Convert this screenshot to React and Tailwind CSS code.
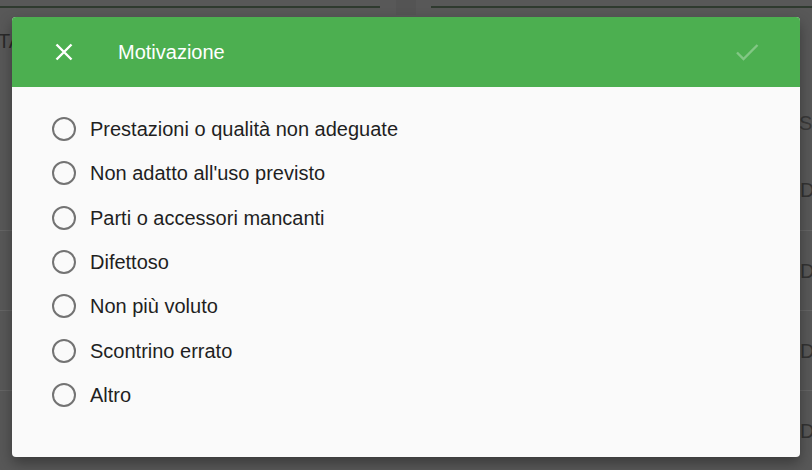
import React from "react";

const options = [
  "Prestazioni o qualità non adeguate",
  "Non adatto all'uso previsto",
  "Parti o accessori mancanti",
  "Difettoso",
  "Non più voluto",
  "Scontrino errato",
  "Altro",
];

function BgSide({ side }) {
  const isRight = side === "right";
  return (
    <div className="flex w-[12px] flex-col overflow-hidden">
      <div className="h-[86px] flex items-center">
        {!isRight && (
          <span className="ml-[-2px] text-[20px] leading-none text-[#2a2a2a]">TA</span>
        )}
      </div>
      <div className="h-[66px] flex items-center pt-[12px]">
        {isRight && (
          <span className="ml-[-1px] text-[20px] leading-none text-[#3a3a3a] whitespace-nowrap">Sta</span>
        )}
      </div>
      {[0, 1, 2, 3].map((i) => (
        <div key={i} className={`h-[80px] flex items-center ${i > 0 ? "border-t border-[#656565]" : ""}`}>
          {isRight && (
            <span className="text-[20px] leading-none text-[#333333]">D</span>
          )}
        </div>
      ))}
    </div>
  );
}

export default function App() {
  return (
    <div className="relative h-[470px] w-[812px] overflow-hidden bg-[#585858] [font-family:'Liberation_Sans',Arial,sans-serif]">
      {/* underlying page (dimmed) */}
      <div className="flex h-full w-full flex-col">
        <div className="flex h-[17px] w-full items-start">
          <div className="mt-[6px] h-[2px] w-[380px] bg-[#2f3a2f]" />
          <div className="h-full w-[16px]" />
          <div className="h-full w-[20px] bg-[#545454]" />
          <div className="h-full w-[15px]" />
          <div className="mt-[6px] h-[2px] flex-1 bg-[#2f3a2f]" />
        </div>
        <div className="flex flex-1 justify-between mt-[-17px]">
          <BgSide side="left" />
          <BgSide side="right" />
        </div>
      </div>

      {/* dialog */}
      <div className="absolute left-[12px] top-[17px] flex h-[440px] w-[788px] flex-col overflow-hidden rounded-[4px] bg-[#fafafa] shadow-[0_6px_14px_rgba(0,0,0,0.35)]">
        <div className="flex h-[70px] shrink-0 items-center bg-[#4caf50] pl-[43px] pr-[41px]">
          <svg width="18" height="18" viewBox="0 0 18 18" className="shrink-0">
            <path d="M1.5 1.5 L16.5 16.5 M16.5 1.5 L1.5 16.5" stroke="#ffffff" strokeWidth="2.4" fill="none" />
          </svg>
          <div className="ml-[45px] text-[20px] leading-none text-white">Motivazione</div>
          <div className="flex-1" />
          <svg width="24" height="20" viewBox="0 0 24 20" className="shrink-0">
            <path d="M2 10.5 L8.5 17 L22.5 3" stroke="rgba(255,255,255,0.3)" strokeWidth="2.4" fill="none" />
          </svg>
        </div>
        <div className="flex flex-col pl-[40px] pt-[20px]">
          {options.map((o) => (
            <label key={o} className="flex h-[44.33px] items-center">
              <span className="h-[24px] w-[24px] shrink-0 rounded-full border-[2.5px] border-[#737373]" />
              <span className="ml-[14px] text-[20px] leading-none text-[#1f1f1f]">{o}</span>
            </label>
          ))}
        </div>
      </div>
    </div>
  );
}
